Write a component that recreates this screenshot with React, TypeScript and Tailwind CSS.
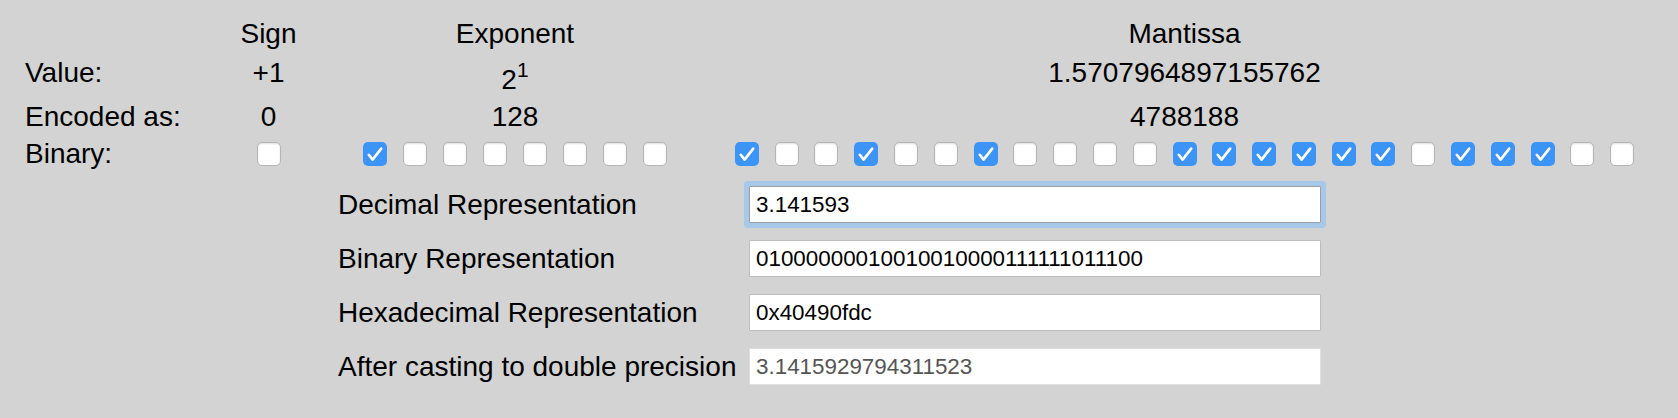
import React from "react";

const SIGN = "0";
const EXPONENT = "10000000";
const MANTISSA = "10010010000111111011100";

const font = { fontFamily: '"Liberation Sans", Arial, Helvetica, sans-serif' };

const Bit = ({ on }: { on: boolean }) =>
  on ? (
    <span className="w-[24px] h-[24px] rounded-[5px] bg-[#3c95f6] flex items-center justify-center shrink-0">
      <svg width="24" height="24" viewBox="0 0 24 24" fill="none">
        <path
          d="M5.8 12.8 L9.6 17.6 L18.2 6.6"
          stroke="white"
          strokeWidth="2.6"
          strokeLinecap="round"
          strokeLinejoin="round"
        />
      </svg>
    </span>
  ) : (
    <span className="w-[24px] h-[24px] rounded-[5px] bg-white border border-[#b4b4b4] shadow-[inset_0_1px_2px_rgba(0,0,0,0.12)] shrink-0" />
  );

const Bits = ({ bits, gap }: { bits: string; gap: string }) => (
  <div className={`flex ${gap}`}>
    {bits.split("").map((b, i) => (
      <Bit key={i} on={b === "1"} />
    ))}
  </div>
);

const Row = ({
  label,
  sign,
  exp,
  man,
  className,
  expClassName = "",
}: {
  label: React.ReactNode;
  sign: React.ReactNode;
  exp: React.ReactNode;
  man: React.ReactNode;
  className: string;
  expClassName?: string;
}) => (
  <div className={`flex items-center ${className}`}>
    <div className="w-[207px]">{label}</div>
    <div className="w-[73px] flex justify-center">{sign}</div>
    <div className={`ml-[58px] w-[304px] flex justify-center ${expClassName}`}>{exp}</div>
    <div className="ml-[68px] w-[899px] flex justify-center">{man}</div>
  </div>
);

const Field = ({
  label,
  value,
  focused,
  muted,
}: {
  label: string;
  value: string;
  focused?: boolean;
  muted?: boolean;
}) => (
  <div className="flex items-center">
    <div className="w-[411px] whitespace-nowrap">{label}</div>
    <input
      readOnly
      value={value}
      style={font}
      className={`w-[572px] h-[37px] px-[6px] bg-white text-[22.4px] outline-none rounded-[1px] border ${
        focused ? "border-[#9e9e9e] ring-[5px] ring-[#a8c8ea]" : muted ? "border-[#dedede]" : "border-[#bdbdbd]"
      } ${muted ? "text-[#555555]" : "text-black"}`}
    />
  </div>
);

export default function App() {
  return (
    <div className="w-full h-[418px] bg-[#d3d3d3] text-black text-[28px] leading-[32px]" style={font}>
      <div className="w-[1659px]">
        <div className="w-[1609px] mx-auto pt-[14px]">
          <Row className="h-[40px]" label="" sign="Sign" exp="Exponent" man="Mantissa" />
          <Row
            className="h-[38px]"
            expClassName="pt-[14px]"
            label="Value:"
            sign="+1"
            exp={
              <span>
                2<sup className="text-[21px] -top-[12px]">1</sup>
              </span>
            }
            man="1.5707964897155762"
          />
          <Row className="h-[49px]" label="Encoded as:" sign="0" exp="128" man="4788188" />
          <Row
            className="h-[26px]"
            label="Binary:"
            sign={<Bits bits={SIGN} gap="gap-[16px]" />}
            exp={<Bits bits={EXPONENT} gap="gap-[16px]" />}
            man={<Bits bits={MANTISSA} gap="gap-[15.8px]" />}
          />
        </div>

        <div className="w-[983px] mx-auto mt-[19px] flex flex-col gap-[17px]">
          <Field label="Decimal Representation" value="3.141593" focused />
          <Field label="Binary Representation" value="01000000010010010000111111011100" />
          <Field label="Hexadecimal Representation" value="0x40490fdc" />
          <Field label="After casting to double precision" value="3.1415929794311523" muted />
        </div>
      </div>
    </div>
  );
}
